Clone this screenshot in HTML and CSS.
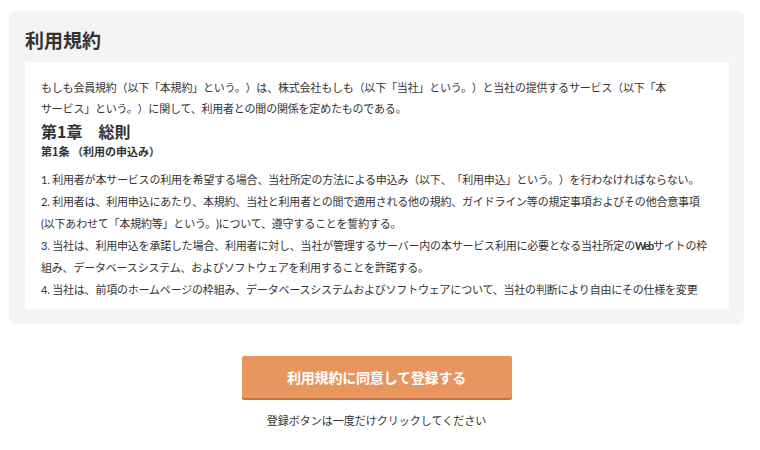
FILE: index.html
```html
<!DOCTYPE html>
<html lang="ja">
<head>
<meta charset="utf-8">
<title>利用規約</title>
<link rel="stylesheet" href="styles.css">
</head>
<body>
<div class="page">
  <section class="terms">
    <h1 class="terms-title">利用規約</h1>
    <div class="terms-body">
      <div class="terms-scroll">
        <p class="intro">もしも会員規約（以下「本規約」という。）は、株式会社もしも（以下「当社」という。）と当社の提供するサービス（以下「本サービス」という。）に関して、利用者との間の関係を定めたものである。</p>
        <h2 class="chapter">第1章　総則</h2>
        <h3 class="article">第1条 （利用の申込み）</h3>
        <ol class="clauses">
          <li>1. 利用者が本サービスの利用を希望する場合、当社所定の方法による申込み（以下、「利用申込」という。）を行わなければならない。</li>
          <li>2. 利用者は、利用申込にあたり、本規約、当社と利用者との間で適用される他の規約、ガイドライン等の規定事項およびその他合意事項(以下あわせて「本規約等」という。)について、遵守することを誓約する。</li>
          <li>3. 当社は、利用申込を承諾した場合、利用者に対し、当社が管理するサーバー内の本サービス利用に必要となる当社所定の<span class="latin">Web</span>サイトの枠組み、データベースシステム、およびソフトウェアを利用することを許諾する。</li>
          <li>4. 当社は、前項のホームページの枠組み、データベースシステムおよびソフトウェアについて、当社の判断により自由にその仕様を変更することができる。</li>
        </ol>
      </div>
    </div>
  </section>
  <div class="actions">
    <button class="agree-btn" type="button">利用規約に同意して登録する</button>
    <p class="note">登録ボタンは一度だけクリックしてください</p>
  </div>
</div>
</body>
</html>
```

FILE: styles.css
```css
html, body {
  margin: 0;
  padding: 0;
  background: #ffffff;
}

body {
  font-family: "Noto Sans CJK JP", "Noto Sans", sans-serif;
  color: #333333;
  text-spacing-trim: space-all;
}

.page {
  width: 735px;
  margin: 11px 0 0 9px;
}

.terms {
  background: #f4f4f4;
  border-radius: 7px;
  padding: 15px 15px 15px 16px;
}

.terms-title {
  margin: 0 0 8px 0;
  font-size: 19px;
  line-height: 28px;
  font-weight: 700;
  color: #333333;
}

.terms-body {
  background: #ffffff;
  height: 247px;
  box-sizing: border-box;
  padding: 15px 22px 0 16px;
}

.terms-scroll {
  height: 226px;
  overflow: hidden;
}

.intro {
  margin: 0;
  font-size: 11px;
  line-height: 21px;
  letter-spacing: -0.2px;
  max-width: 632px;
}

.chapter {
  margin: 1px 0 0 0;
  font-size: 16px;
  line-height: 22px;
  font-weight: 700;
}

.article {
  margin: 0;
  font-size: 11px;
  line-height: 18px;
  font-weight: 700;
}

.clauses {
  list-style: none;
  margin: 9px 0 0 0;
  padding: 0;
  font-family: "Lato", "Noto Sans CJK JP", sans-serif;
  font-size: 11px;
  line-height: 22px;
  letter-spacing: -0.2px;
}

.clauses li {
  margin: 0;
}

.latin {
  font-weight: 700;
  font-size: 10.5px;
  letter-spacing: -1.3px;
}

.actions {
  display: flex;
  flex-direction: column;
  align-items: center;
  padding-top: 32px;
}

.agree-btn {
  width: 270px;
  height: 42px;
  border: none;
  border-radius: 2px;
  background: #e8965f;
  box-shadow: 0 2px 0 #c27443;
  color: #ffffff;
  font-family: "Noto Sans CJK JP", "Noto Sans", sans-serif;
  font-size: 14px;
  font-weight: 700;
  letter-spacing: -0.2px;
  cursor: pointer;
}

.note {
  margin: 14px 0 0 0;
  font-size: 11px;
  line-height: 16px;
  color: #333333;
}
```
